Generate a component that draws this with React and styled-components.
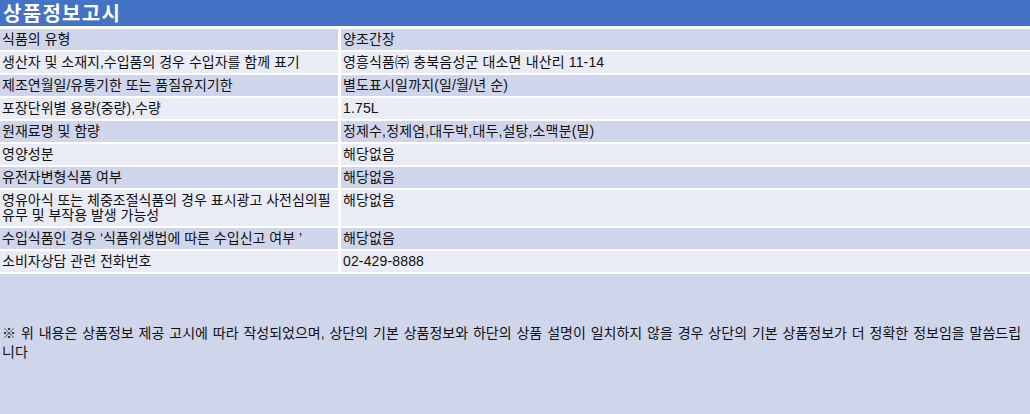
import React from "react";
import styled, { createGlobalStyle } from "styled-components";

const Global = createGlobalStyle`
  html, body { margin: 0; padding: 0; background: #ffffff; }
  body { font-family: "Liberation Sans", "Noto Sans CJK KR", sans-serif; color: #111; }
`;

const Page = styled.div`
  width: 1030px;
  display: flex;
  flex-direction: column;
`;

const Title = styled.h1`
  margin: 0 0 3px;
  height: 26px;
  display: flex;
  align-items: center;
  padding-left: 3px;
  background: #4472c4;
  color: #ffffff;
  font-family: "Noto Sans CJK KR", sans-serif;
  font-size: 20px;
  letter-spacing: 1.3px;
  line-height: 1;
  font-weight: 700;
`;

const Table = styled.div`
  display: flex;
  flex-direction: column;
  gap: 2px;
`;

const Row = styled.div`
  display: grid;
  grid-template-columns: 338px 1fr;
  column-gap: 3px;
`;

const Cell = styled.div`
  background: ${(p) => (p.$dark ? "#cfd5ea" : "#e9ebf5")};
  padding: 3px 2px 3px 2px;
  font-size: 14px;
  line-height: 15px;
  letter-spacing: ${(p) => (p.$value ? "0.15px" : "0")};
`;

const Notice = styled.div`
  margin-top: 2px;
  height: 141px;
  box-sizing: border-box;
  padding: 50px 2px 0;
  background: #cfd5ea;
  font-size: 14px;
  line-height: 19px;
  word-spacing: 1px;
`;

const rows = [
  ["식품의 유형", "양조간장"],
  ["생산자 및 소재지,수입품의 경우 수입자를 함께 표기", "영흥식품㈜ 충북음성군 대소면 내산리 11-14"],
  ["제조연월일/유통기한 또는 품질유지기한", "별도표시일까지(일/월/년 순)"],
  ["포장단위별 용량(중량),수량", "1.75L"],
  ["원재료명 및 함량", "정제수,정제염,대두박,대두,설탕,소맥분(밀)"],
  ["영양성분", "해당없음"],
  ["유전자변형식품 여부", "해당없음"],
  ["영유아식 또는 체중조절식품의 경우 표시광고 사전심의필 유무 및 부작용 발생 가능성", "해당없음"],
  ["수입식품인 경우 ‘식품위생법에 따른 수입신고 여부 ’", "해당없음"],
  ["소비자상담 관련 전화번호", "02-429-8888"],
];

export default function App() {
  return (
    <>
      <Global />
      <Page>
        <Title>상품정보고시</Title>
        <Table>
          {rows.map(([label, value], i) => (
            <Row key={i}>
              <Cell $dark={i % 2 === 0}>{label}</Cell>
              <Cell $dark={i % 2 === 0} $value>{value}</Cell>
            </Row>
          ))}
        </Table>
        <Notice>
          ※ 위 내용은 상품정보 제공 고시에 따라 작성되었으며, 상단의 기본 상품정보와 하단의 상품 설명이 일치하지 않을 경우 상단의 기본 상품정보가 더 정확한 정보임을 말씀드립니다
        </Notice>
      </Page>
    </>
  );
}
